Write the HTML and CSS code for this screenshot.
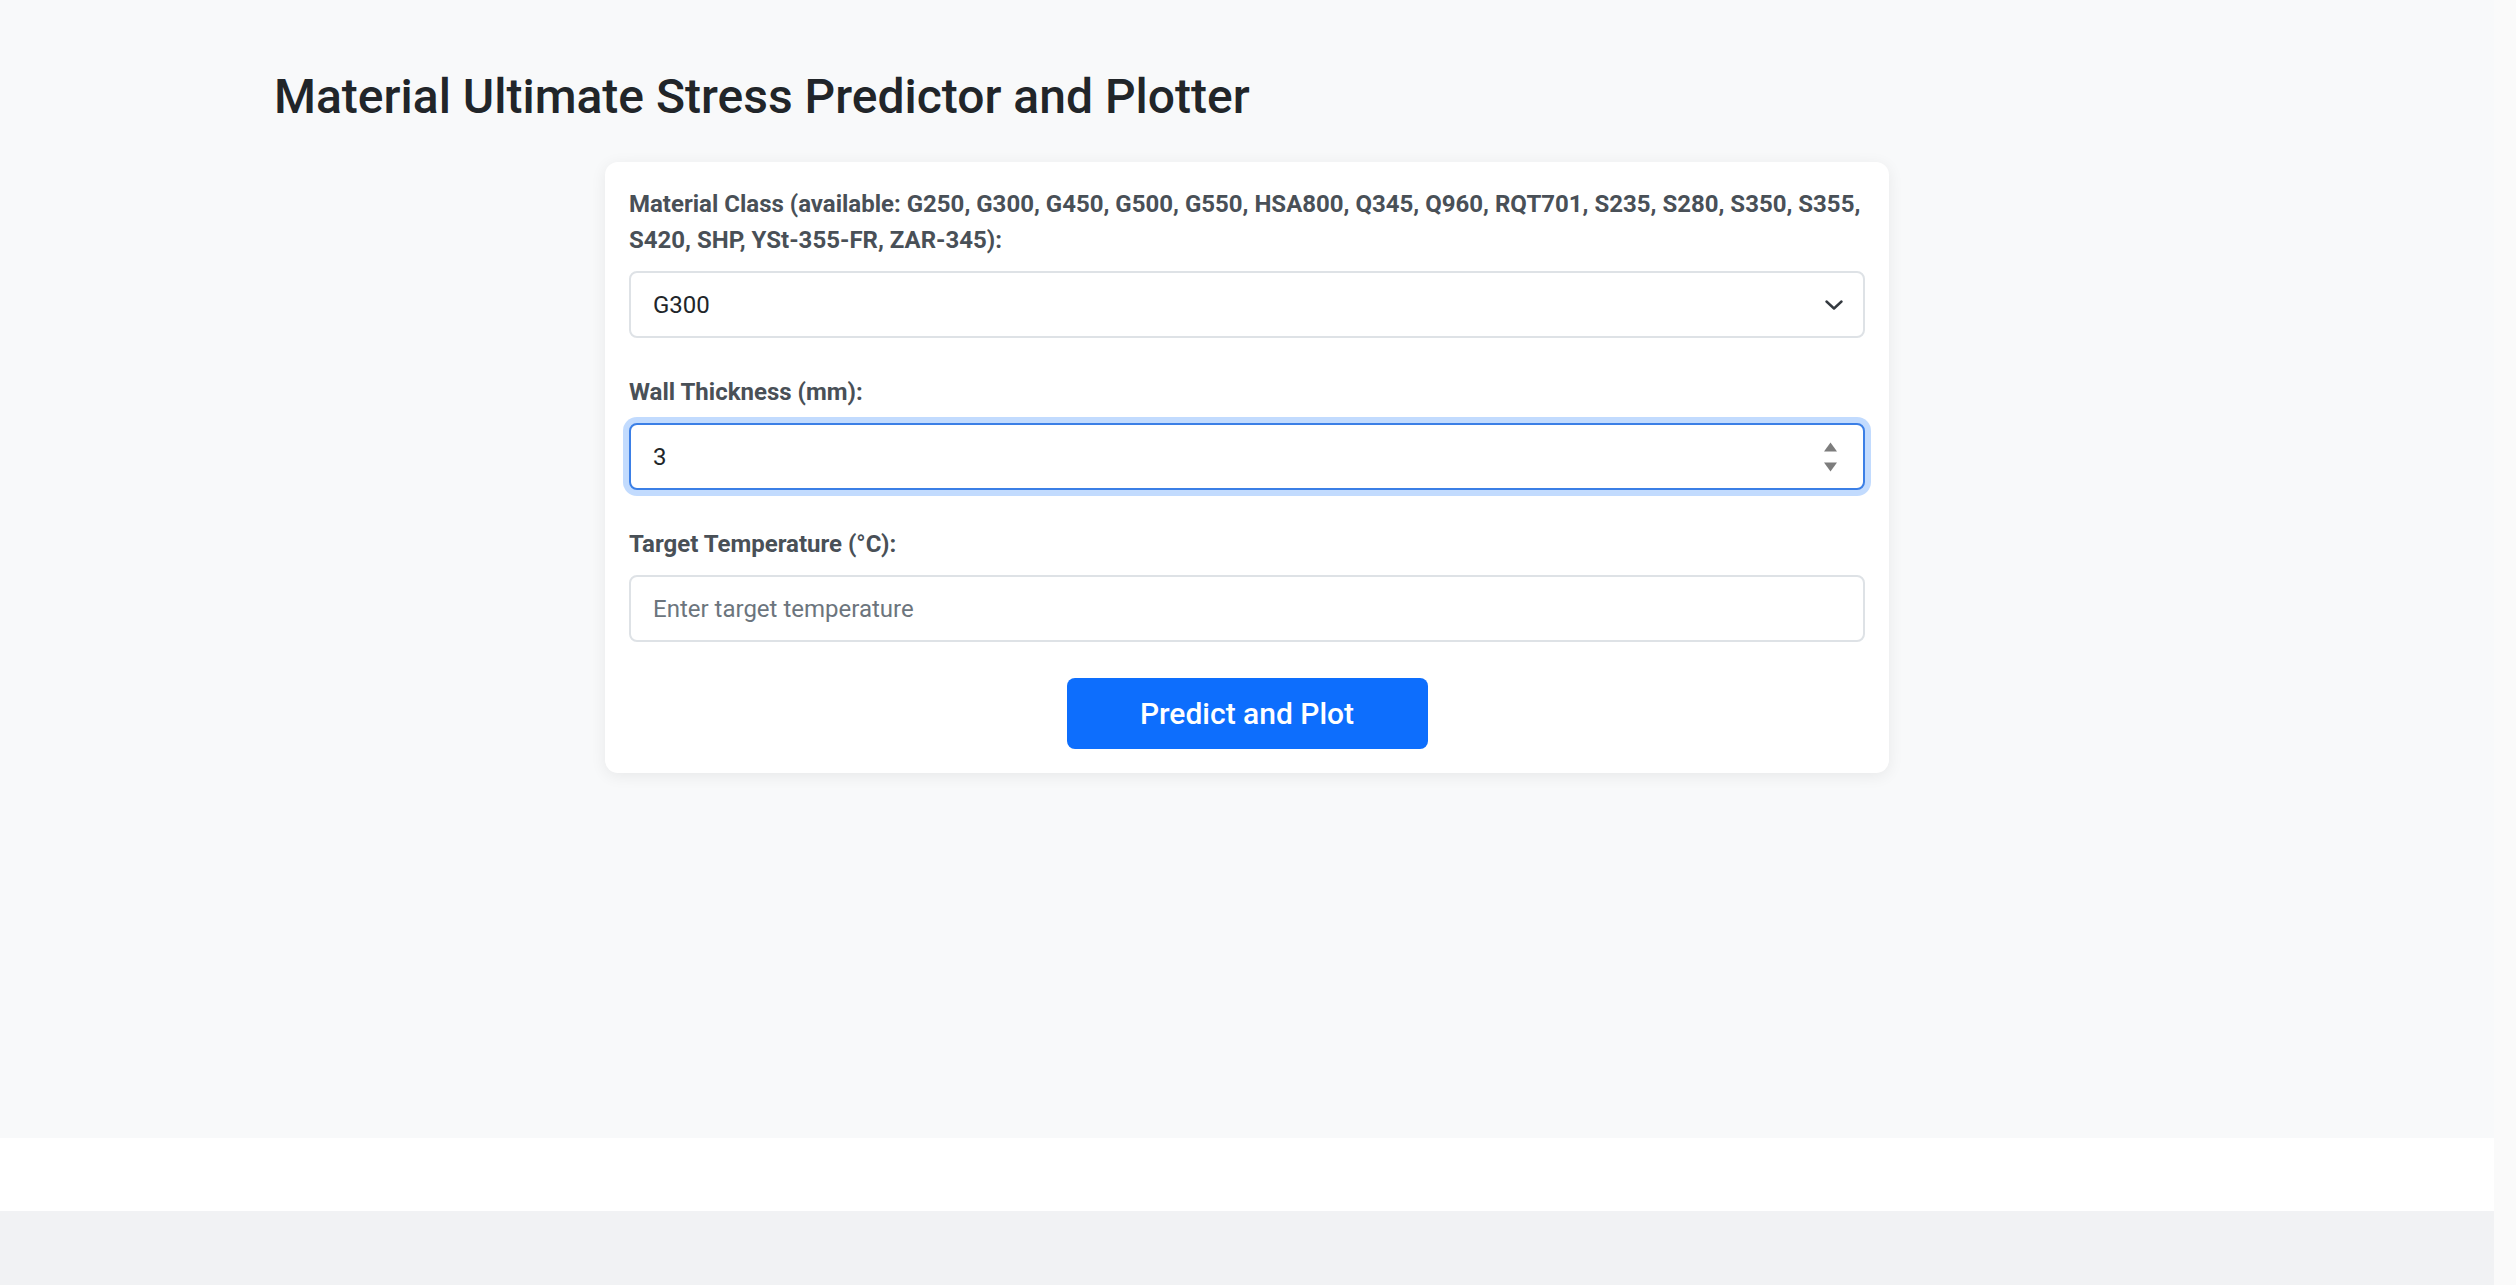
FILE: index.html
```html
<!DOCTYPE html>
<html lang="en">
<head>
    <meta charset="UTF-8">
    <meta name="viewport" content="width=device-width, initial-scale=1.0">
    <title>Material Ultimate Stress Predictor</title>
    <link rel="stylesheet" href="styles.css">
</head>
<body>
    <main class="page">
        <div class="container">
            <h1 class="page-title">Material Ultimate Stress Predictor and Plotter</h1>

            <form class="predict-card" id="predictForm" onsubmit="event.preventDefault()">
                <div class="form-group">
                    <label for="material">Material Class (available: G250, G300, G450, G500, G550, HSA800, Q345, Q960, RQT701, S235, S280, S350, S355, S420, SHP, YSt-355-FR, ZAR-345):</label>
                    <div class="select-wrap">
                        <select id="material" name="material" class="form-control">
                            <option>G250</option>
                            <option selected>G300</option>
                            <option>G450</option>
                            <option>G500</option>
                            <option>G550</option>
                            <option>HSA800</option>
                            <option>Q345</option>
                            <option>Q960</option>
                            <option>RQT701</option>
                            <option>S235</option>
                            <option>S280</option>
                            <option>S350</option>
                            <option>S355</option>
                            <option>S420</option>
                            <option>SHP</option>
                            <option>YSt-355-FR</option>
                            <option>ZAR-345</option>
                        </select>
                        <svg class="select-arrow" viewBox="0 0 18 10" aria-hidden="true">
                            <path d="M1.5 1.5 L9 8.5 L16.5 1.5" fill="none" stroke="#343a40" stroke-width="2.4" stroke-linecap="round" stroke-linejoin="round"/>
                        </svg>
                    </div>
                </div>

                <div class="form-group">
                    <label for="thickness">Wall Thickness (mm):</label>
                    <div class="number-wrap">
                        <input type="number" id="thickness" name="thickness" class="form-control" value="3" autofocus>
                        <svg class="spin" viewBox="0 0 15 31" aria-hidden="true">
                            <path d="M1 10 L7.5 1 L14 10 Z" fill="#7d7d7d"/>
                            <path d="M1 21 L14 21 L7.5 30 Z" fill="#7d7d7d"/>
                        </svg>
                    </div>
                </div>

                <div class="form-group">
                    <label for="temperature">Target Temperature (°C):</label>
                    <input type="number" id="temperature" name="temperature" class="form-control" placeholder="Enter target temperature">
                </div>

                <div class="actions">
                    <button type="submit" class="predict-btn">Predict and Plot</button>
                </div>
            </form>
        </div>
    </main>

    <div class="result-bar"></div>
    <div class="plot-area"></div>
</body>
</html>
```

FILE: styles.css
```css
html {
    background-color: #fafafa;
}

html, body {
    padding: 0;
}

body {
    margin: 0 22px 0 0;
    font-family: Roboto, "Liberation Sans", sans-serif;
    background-color: #f8f9fa;
    color: #212529;
}

::-webkit-scrollbar {
    width: 22px;
}

::-webkit-scrollbar-track {
    background: #fafafa;
}

::-webkit-scrollbar-thumb {
    background: #8b8b8b;
    border: 4px solid #fafafa;
    border-radius: 11px;
}

.page {
    background-color: #f8f9fa;
    height: 1138px;
}

.container {
    max-width: 1946px;
    margin: 0 auto;
    padding-top: 68px;
}

.page-title {
    margin: 0 0 36px;
    font-size: 48px;
    font-weight: 500;
    line-height: 58px;
    color: #212529;
}

.predict-card {
    box-sizing: border-box;
    max-width: 1284px;
    margin: 0 auto;
    padding: 24px;
    background-color: #fff;
    border-radius: 13px;
    box-shadow: 0 3px 16px rgba(0, 0, 0, 0.07);
}

.form-group {
    margin-bottom: 36px;
}

.form-group label {
    display: block;
    margin-bottom: 13px;
    font-size: 24px;
    font-weight: 700;
    line-height: 36px;
    color: #495057;
}

.form-control {
    display: block;
    box-sizing: border-box;
    width: 100%;
    height: 67px;
    padding: 0 22px;
    font-family: inherit;
    font-size: 24px;
    color: #212529;
    background-color: #fff;
    border: 2px solid #dee2e6;
    border-radius: 8px;
    outline: none;
    -webkit-appearance: none;
    appearance: none;
}

.form-control::placeholder {
    color: #6c757d;
}

.form-control:focus {
    border-color: #3b7fe6;
    box-shadow: 0 0 0 6px rgba(13, 110, 253, 0.25);
}

input[type=number]::-webkit-inner-spin-button,
input[type=number]::-webkit-outer-spin-button {
    -webkit-appearance: none;
    margin: 0;
}

.select-wrap,
.number-wrap {
    position: relative;
}

.select-arrow {
    position: absolute;
    right: 22px;
    top: 50%;
    width: 18px;
    height: 10px;
    transform: translateY(-50%);
    pointer-events: none;
}

.spin {
    position: absolute;
    right: 27px;
    top: 50%;
    width: 15px;
    height: 31px;
    transform: translateY(-50%);
    pointer-events: none;
}

.actions {
    text-align: center;
}

.predict-btn {
    width: 361px;
    height: 71px;
    font-family: inherit;
    font-size: 30px;
    font-weight: 500;
    color: #fff;
    background-color: #0d6efd;
    border: none;
    border-radius: 8px;
    cursor: pointer;
}

.predict-btn:hover {
    background-color: #0b5ed7;
}

.result-bar {
    height: 73px;
    background-color: #fff;
}

.plot-area {
    height: 460px;
    background-color: #f1f2f4;
}
```
